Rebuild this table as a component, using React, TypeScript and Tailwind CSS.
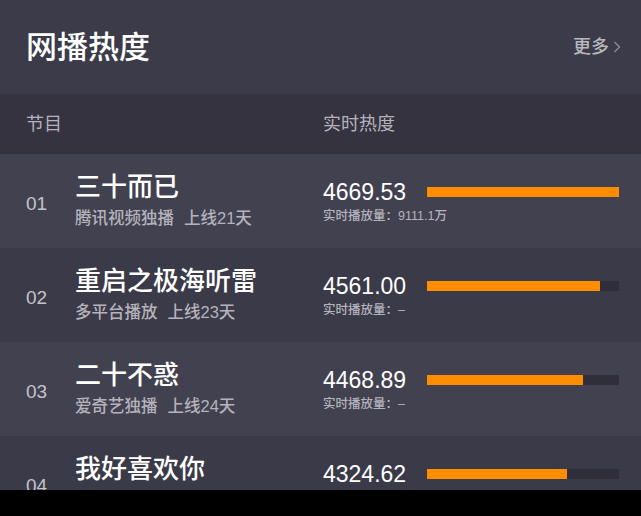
const ROWS = [
  { no: "01", name: "三十而已", src: "腾讯视频独播", days: "上线21天", heat: "4669.53", play: "9111.1万", pct: 100, bg: "bg-[#424150]" },
  { no: "02", name: "重启之极海听雷", src: "多平台播放", days: "上线23天", heat: "4561.00", play: "–", pct: 90, bg: "bg-[#3b3a48]" },
  { no: "03", name: "二十不惑", src: "爱奇艺独播", days: "上线24天", heat: "4468.89", play: "–", pct: 81, bg: "bg-[#424150]" },
  { no: "04", name: "我好喜欢你", src: "", days: "", heat: "4324.62", play: "", pct: 73, bg: "bg-[#3b3a48]" },
];

const FONT = "font-['Liberation_Sans','Noto_Sans_CJK_SC',sans-serif]";

export default function App() {
  return (
    <div className={`flex h-[516px] w-[641px] flex-col overflow-hidden bg-black ${FONT}`}>
      <div className="flex h-[490px] flex-col overflow-hidden">
        <div className="flex h-[94px] shrink-0 items-center justify-between bg-[#3c3b49] pl-[26px] pr-[20px]">
          <div className="text-[31px] font-medium leading-none text-white">网播热度</div>
          <div className="flex items-center gap-[4px] text-[18px] font-medium text-[#b8b7c0]">
            更多
            <svg width="8" height="14" viewBox="0 0 8 14" fill="none">
              <path d="M1.5 2l5 5-5 5" stroke="#8e8d98" strokeWidth="1.3" />
            </svg>
          </div>
        </div>

        <div className="flex h-[60px] shrink-0 items-center bg-[#34333f] text-[18px] text-[#b4b3bc]">
          <div className="w-[323px] pl-[26px]">节目</div>
          <div>实时热度</div>
        </div>

        {ROWS.map((r) => (
          <div key={r.no} className={`flex h-[94px] shrink-0 items-center ${r.bg}`}>
            <div className="flex w-[323px] items-center pl-[26px]">
              <div className="w-[49px] pt-[6px] text-[19px] text-[#c4c3cb]">{r.no}</div>
              <div className="flex flex-col">
                <div className="text-[26px] font-medium leading-[30px] text-white">{r.name}</div>
                <div className="mt-[4px] flex h-[24px] gap-[10px] text-[16.5px] font-medium leading-[24px] text-[#b4b3bc]">
                  {r.src && <span>{r.src}</span>}
                  {r.days && <span>{r.days}</span>}
                </div>
              </div>
            </div>
            <div className="flex flex-col">
              <div className="flex items-center">
                <div className="w-[104px] text-[23px] leading-[28px] text-white">{r.heat}</div>
                <div className="h-[10px] w-[192px] bg-[#2f2e3a]">
                  <div className="h-full bg-[#ff8d00]" style={{ width: `${r.pct}%` }} />
                </div>
              </div>
              <div className="mt-[2px] h-[16px] text-[12.5px] font-medium leading-[16px] text-[#b4b3bc]">
                {r.play && `实时播放量：${r.play}`}
              </div>
            </div>
          </div>
        ))}
      </div>
    </div>
  );
}
